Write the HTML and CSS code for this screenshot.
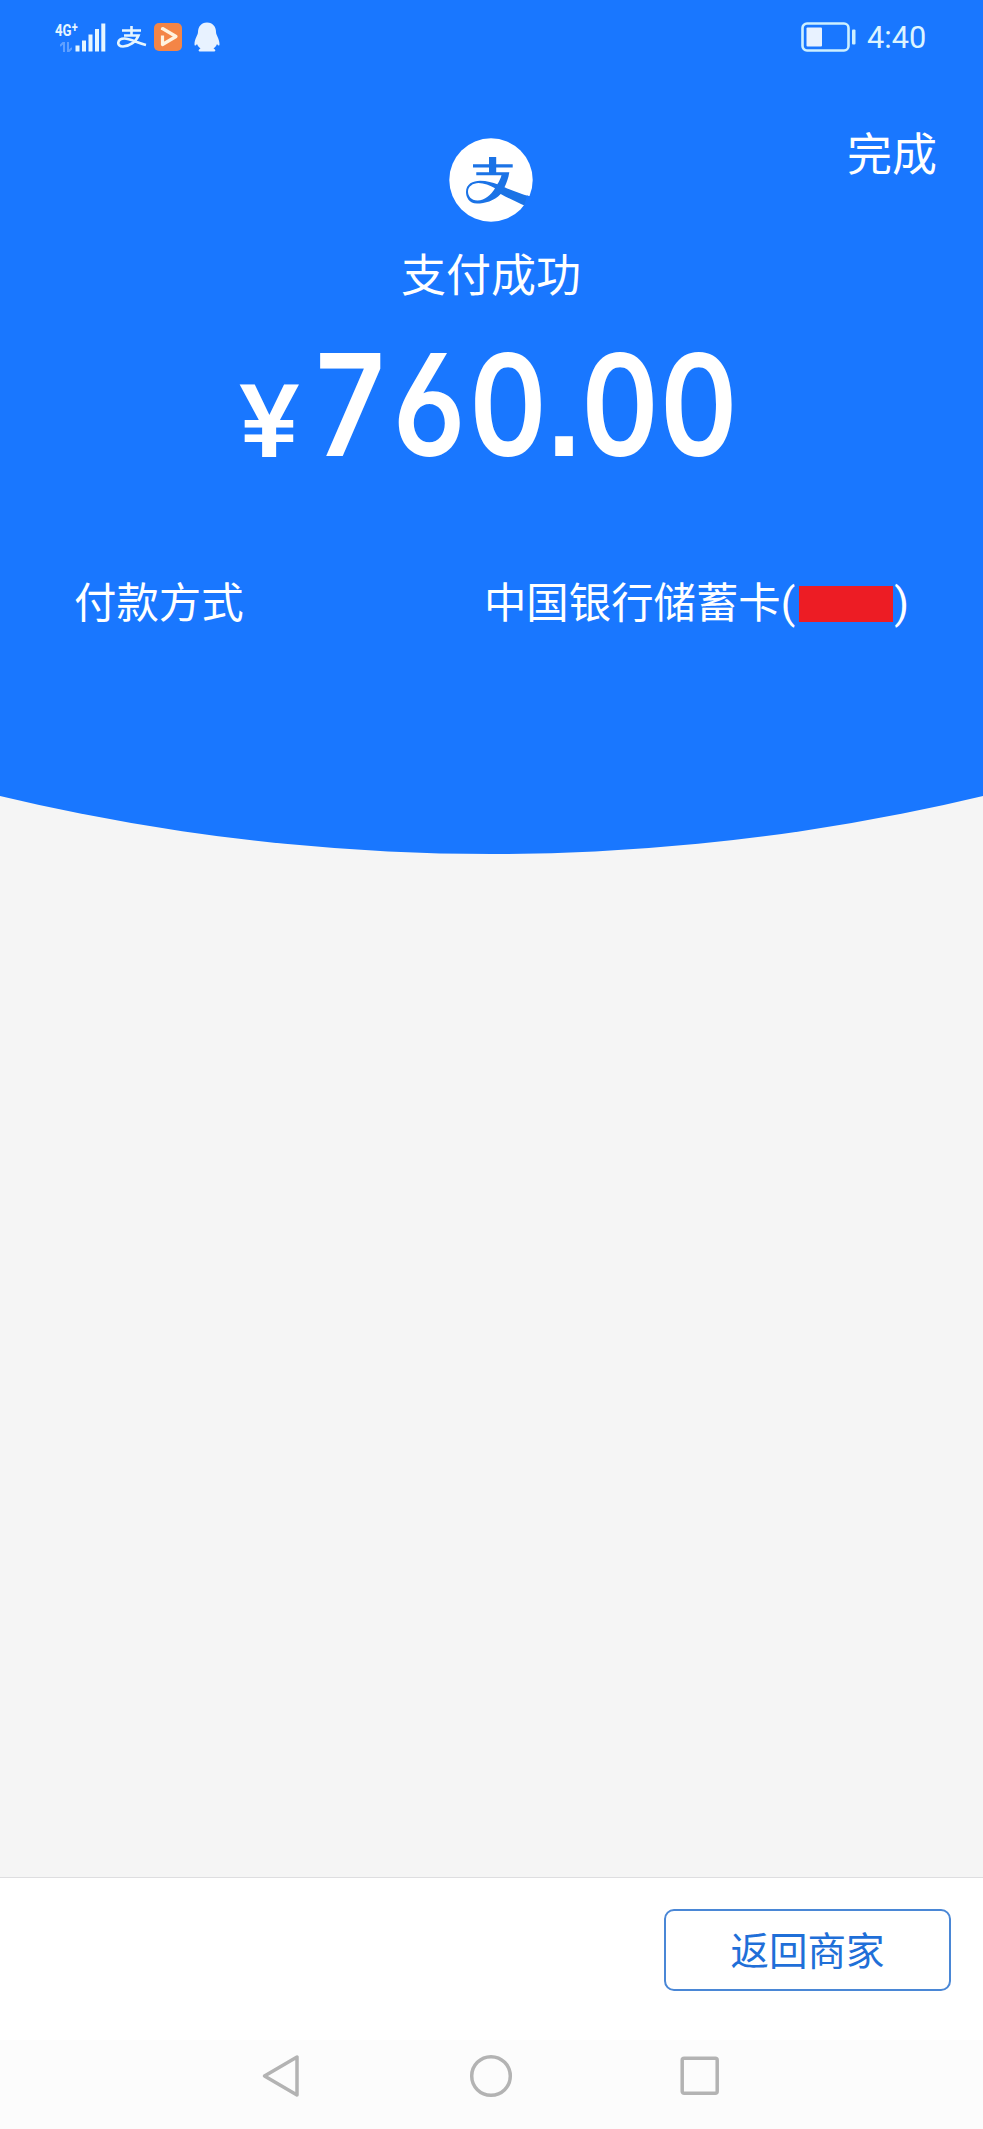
FILE: index.html
```html
<!DOCTYPE html>
<html lang="zh-CN">
<head>
    <meta charset="UTF-8">
    <meta name="viewport" content="width=device-width, initial-scale=1.0">
    <title>支付成功</title>
    <link rel="stylesheet" href="styles.css">
</head>
<body>
    <div class="header">
        <!-- Status bar -->
        <div class="status-bar">
            <div class="status-left">
                <div class="network">
                    <span class="network-type">4G<sup>+</sup></span>
                    <svg class="arrows" width="12" height="10" viewBox="0 0 12 10">
                        <path d="M0 4L4 0V10M8 0V10L12 6" fill="none" stroke="#fff" stroke-width="2"/>
                    </svg>
                </div>
                <svg class="signal" width="31" height="29" viewBox="0 0 31 29">
                    <path d="M0.5 22.5h4v6h-4zM7 17.5h4v11H7zM13.5 11.5h4v17h-4zM20 6h4v22.5h-4zM26.3 0.5h4v28h-4z" fill="#e6f6ff"/>
                </svg>
                <svg class="zhi" width="30" height="22" viewBox="0 0 30 22">
                    <path d="M14.5 0V9M5 4.500H24M7 9.500H21.5C19 16 12 20.5 6 20.5C-1 20.5 0 12.500 7.500 12.500C13 12.500 19 16.500 29 19" fill="none" stroke="#e6f6ff" stroke-width="2.600"/>
                </svg>
                <svg class="video" width="28" height="28" viewBox="0 0 28 28">
                    <rect width="28" height="28" rx="5" fill="#f48546"/>
                    <path d="M8.500 7V5.500L22 13.500L8.500 21.500V12.500" fill="none" stroke="#fff3df" stroke-width="3.200" stroke-linejoin="round"/>
                </svg>
                <svg class="penguin" width="26" height="30" viewBox="0 0 26 30">
                    <path d="M13 0.500C7 0.500 4 5 4 10C4 13 0.500 17 0.500 22C0.500 24 1.500 24 3 22C3.500 24 5 25 6.500 26.500C4 27.500 4 29.500 6.500 29.500H19.500C22 29.500 22 27.500 19.500 26.500C21 25 22.500 24 23 22C24.500 24 25.500 24 25.500 22C25.500 17 22 13 22 10C22 5 19 0.500 13 0.500Z" fill="#e8f2ff"/>
                </svg>
            </div>
            <div class="status-right">
                <svg width="55" height="30" viewBox="0 0 55 30">
                    <rect x="1.500" y="1.500" width="46" height="27" rx="4.500" fill="none" stroke="#cdf0ff" stroke-width="2.600"/>
                    <rect x="5.500" y="5.500" width="15.500" height="19" rx="1" fill="#e8f2ff"/>
                    <rect x="51" y="7.500" width="3.500" height="15" rx="1" fill="#cdf0ff"/>
                </svg>
                <span class="time">4:40</span>
            </div>
        </div>

        <div class="done">完成</div>

        <!-- Payment result -->
        <div class="result">
            <svg class="logo" width="84" height="84" viewBox="0 0 84 84">
                <circle cx="42" cy="42" r="41.700" fill="#fff"/>
                <g fill="#1b73e6">
                    <path d="M40 19H47.200V36H40zM24 26.200H63.700V29.500H24z"/>
                    <path fill-rule="evenodd" d="M27.300 34.200H60.300C59.500 40 57.500 45 55.500 49.200C63 52.500 72 56 80.500 58.200L75.300 67.500C68 64 59 60 51.700 56C45 63 36 65.500 28 65.500C20 65.500 17 59 17 54C17 46 24 42.800 31 42.800C38 42.800 44 44.800 48.300 46.300C50.500 43 51.700 40 52.500 37.200H27.300ZM19 53.500C19 58 22 62.500 28.500 62.500C36 62.500 42 57 46 50.300C41 47.500 35 45 29.500 45C24 45 19 48.500 19 53.500Z"/>
                </g>
                <path d="M78 57.500L84 59V70H73.500L75.300 67.500Z" fill="#1977ff"/>
            </svg>
            <div class="result-text">支付成功</div>
            <div class="amount">
                <span class="currency">¥</span>
                <span class="number">760.00</span>
            </div>
        </div>

        <div class="method">
            <span>付款方式</span>
            <span class="card">中国银行储蓄卡<i>(</i><b class="mask"></b><i>)</i></span>
        </div>
    </div>

    <div class="content"></div>

    <div class="footer">
        <button class="back-btn">返回商家</button>
    </div>

    <!-- System navigation -->
    <div class="nav">
        <svg width="40" height="44" viewBox="0 0 40 44">
            <path d="M36 3V41L3.500 22Z" fill="none" stroke="#b3b3b3" stroke-width="3.500" stroke-linejoin="round"/>
        </svg>
        <svg width="44" height="44" viewBox="0 0 44 44">
            <circle cx="22" cy="22" r="19.300" fill="none" stroke="#b3b3b3" stroke-width="3.500"/>
        </svg>
        <svg width="40" height="44" viewBox="0 0 40 44">
            <rect x="2.200" y="4.300" width="35" height="35" rx="2" fill="none" stroke="#b3b3b3" stroke-width="3.500"/>
        </svg>
    </div>
</body>
</html>
```

FILE: styles.css
```css
* {
    box-sizing: border-box;
}
body {
    margin: 0;
    height: 2129px;
    display: flex;
    flex-direction: column;
    background-color: #f5f5f5;
    font-family: Roboto, "Noto Sans CJK SC", sans-serif;
}
svg {
    display: block;
    flex: none;
}
.header {
    height: 854px;
    flex: none;
    background-color: #1977ff;
    color: #fff;
    clip-path: circle(2108px at 50% -1254px);
}
.status-bar {
    height: 74px;
    padding: 0 56px 0 55px;
    display: flex;
    justify-content: space-between;
    align-items: center;
}
.status-left {
    display: flex;
    align-items: center;
}
.network {
    width: 20px;
    height: 29px;
    display: flex;
    flex-direction: column;
    justify-content: space-between;
    align-items: flex-end;
    color: #e6f6ff;
}
.network-type {
    width: 20px;
    font-size: 17px;
    line-height: 14px;
    font-weight: 700;
    white-space: nowrap;
    transform: scaleX(0.78);
    transform-origin: left;
}
.network-type sup {
    font-size: 14px;
    line-height: 0;
    vertical-align: 4px;
}
.arrows {
    opacity: 0.3;
    margin-right: 3px;
}
.zhi {
    margin-left: 11px;
}
.video {
    margin-left: 7px;
}
.penguin {
    margin-left: 12px;
}
.status-right {
    display: flex;
    align-items: center;
    gap: 11px;
}
.time {
    width: 60px;
    font-size: 32px;
    line-height: 32px;
    color: #dcf4ff;
    transform: scaleX(0.96);
    transform-origin: left;
}
/* the logo starts beside this row, so the row pulls it up */
.done {
    height: 115px;
    margin-bottom: -51px;
    padding: 50px 46px 0 0;
    text-align: right;
    font-size: 45px;
    line-height: 64px;
}
.result {
    display: flex;
    flex-direction: column;
    align-items: center;
}
.logo {
    margin-right: 2px;
}
.result-text {
    margin-top: 23px;
    margin-right: 1px;
    font-size: 45px;
    line-height: 64px;
}
.amount {
    width: 506px;
    height: 144px;
    margin-top: 24px;
    display: flex;
    align-items: baseline;
    line-height: 144px;
}
.currency {
    flex: none;
    width: 72px;
    font-size: 102px;
    font-weight: 500;
    transform: scaleX(1.12) translateY(1px);
    transform-origin: left;
}
.number {
    flex: none;
    font-family: Inter, Roboto, sans-serif;
    font-size: 141px;
    font-weight: 600;
    font-feature-settings: "tnum", "ss01", "ss07";
    letter-spacing: 0.5px;
    transform: scaleX(0.86);
    transform-origin: left;
}
.method {
    margin-top: 97px;
    padding: 0 74px;
    display: flex;
    justify-content: space-between;
    font-size: 42.4px;
    line-height: 60px;
}
.card {
    display: flex;
    align-items: center;
}
.card i {
    font-style: normal;
}
.mask {
    width: 94px;
    height: 36px;
    margin: 0 1px 0 4px;
    background-color: #ed1c24;
}
.content {
    flex: 1;
}
.footer {
    height: 163px;
    padding: 31px 32px 0 0;
    border-top: 1px solid #dedee0;
    background-color: #fff;
    display: flex;
    justify-content: flex-end;
}
.back-btn {
    width: 287px;
    height: 82px;
    padding: 0 0 4px;
    border: 2px solid #4a87d6;
    border-radius: 10px;
    background-color: #fff;
    color: #1f6fd8;
    font-family: inherit;
    font-size: 38.5px;
}
.nav {
    height: 89px;
    padding: 14px 263px 0 261px;
    background-color: #fcfcfc;
    display: flex;
    justify-content: space-between;
    align-items: flex-start;
}
```
